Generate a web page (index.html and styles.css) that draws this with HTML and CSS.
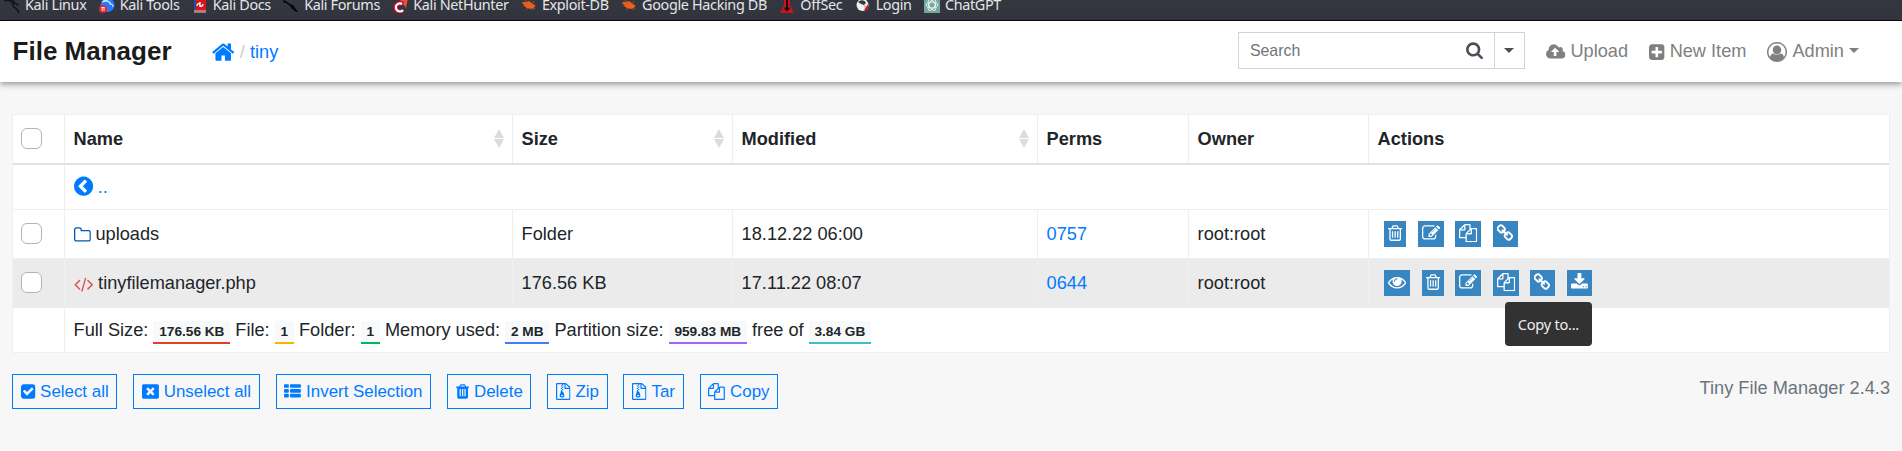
FILE: index.html
```html
<!DOCTYPE html>
<html lang="en">
<head>
<meta charset="utf-8">
<title>File Manager</title>
<link rel="stylesheet" href="styles.css">
</head>
<body>
<svg class="defs" aria-hidden="true">
  <symbol id="home" viewBox="64 0 1664 1792"><path d="M1472 992v480q0 26-19 45t-45 19h-384v-384h-256v384h-384q-26 0-45-19t-19-45v-480q0-1 .5-3t.5-3l575-474 575 474q1 2 1 6zm223-69l-62 74q-8 9-21 11h-3q-13 0-21-7l-692-577-692 577q-12 8-24 7-13-2-21-11l-62-74q-8-10-7-23.5t11-21.5l719-599q32-26 76-26t76 26l244 204v-195q0-14 9-23t23-9h192q14 0 23 9t9 23v408l219 182q10 8 11 21.5t-7 23.5z"/></symbol>
  <symbol id="folder" viewBox="64 0 1664 1792"><path d="M1600 1312v-704q0-40-28-68t-68-28h-704q-40 0-68-28t-28-68v-64q0-40-28-68t-68-28h-320q-40 0-68 28t-28 68v960q0 40 28 68t68 28h1216q40 0 68-28t28-68zm128-704v704q0 92-66 158t-158 66h-1216q-92 0-158-66t-66-158v-960q0-92 66-158t158-66h320q92 0 158 66t66 158v32h672q92 0 158 66t66 158z"/></symbol>
  <symbol id="trash-o" viewBox="192 0 1408 1792"><path d="M704 736v576q0 14-9 23t-23 9h-64q-14 0-23-9t-9-23v-576q0-14 9-23t23-9h64q14 0 23 9t9 23zm256 0v576q0 14-9 23t-23 9h-64q-14 0-23-9t-9-23v-576q0-14 9-23t23-9h64q14 0 23 9t9 23zm256 0v576q0 14-9 23t-23 9h-64q-14 0-23-9t-9-23v-576q0-14 9-23t23-9h64q14 0 23 9t9 23zm128 724v-948h-896v948q0 22 7 40.5t14.5 27 10.5 8.5h832q3 0 10.5-8.5t14.5-27 7-40.5zm-672-1076h448l-48-117q-7-9-17-11h-317q-10 2-17 11zm928 32v64q0 14-9 23t-23 9h-96v948q0 83-47 143.5t-113 60.5h-832q-66 0-113-58.5t-47-141.5v-952h-96q-14 0-23-9t-9-23v-64q0-14 9-23t23-9h309l70-167q15-37 54-63t79-26h320q40 0 79 26t54 63l70 167h309q14 0 23 9t9 23z"/></symbol>
  <symbol id="trash" viewBox="192 0 1408 1792"><path d="M704 1376v-704q0-14-9-23t-23-9h-64q-14 0-23 9t-9 23v704q0 14 9 23t23 9h64q14 0 23-9t9-23zm256 0v-704q0-14-9-23t-23-9h-64q-14 0-23 9t-9 23v704q0 14 9 23t23 9h64q14 0 23-9t9-23zm256 0v-704q0-14-9-23t-23-9h-64q-14 0-23 9t-9 23v704q0 14 9 23t23 9h64q14 0 23-9t9-23zm-544-992h448l-48-117q-7-9-17-11h-317q-10 2-17 11zm928 32v64q0 14-9 23t-23 9h-96v948q0 83-47 143.5t-113 60.5h-832q-66 0-113-58.5t-47-141.5v-952h-96q-14 0-23-9t-9-23v-64q0-14 9-23t23-9h309l70-167q15-37 54-63t79-26h320q40 0 79 26t54 63l70 167h309q14 0 23 9t9 23z"/></symbol>
  <symbol id="edit" viewBox="0 0 1792 1792"><path d="M888 1184l116-116-152-152-116 116v56h96v96h56zm440-720q-16-16-33 1l-350 350q-17 17-1 33t33-1l350-350q17-17 1-33zm80 594v190q0 119-84.5 203.5t-203.5 84.5h-832q-119 0-203.5-84.5t-84.5-203.5v-832q0-119 84.5-203.5t203.5-84.5h832q63 0 117 25 15 7 18 23 3 17-9 29l-49 49q-14 14-32 8-23-6-45-6h-832q-66 0-113 47t-47 113v832q0 66 47 113t113 47h832q66 0 113-47t47-113v-126q0-13 9-22l64-64q15-15 35-7t20 29zm-96-738l288 288-672 672h-288v-288zm444 132l-92 92-288-288 92-92q28-28 68-28t68 28l152 152q28 28 28 68t-28 68z"/></symbol>
  <symbol id="copy" viewBox="0 0 1792 1792"><path d="M1696 384q40 0 68 28t28 68v1216q0 40-28 68t-68 28h-960q-40 0-68-28t-28-68v-288h-544q-40 0-68-28t-28-68v-672q0-40 20-88t48-76l408-408q28-28 76-48t88-20h416q40 0 68 28t28 68v328q68-40 128-40h416zm-544 213l-299 299h299v-299zm-640-384l-299 299h299v-299zm196 647l316-316v-416h-384v416q0 40-28 68t-68 28h-416v640h512v-256q0-40 20-88t48-76zm956 804v-1152h-384v416q0 40-28 68t-68 28h-416v640h896z"/></symbol>
  <symbol id="link" viewBox="64 0 1664 1792"><path d="M1456 1216q0-40-28-68l-208-208q-28-28-68-28-42 0-72 32 3 3 19 18.5t21.5 21.5 15 19 13 25.5 3.5 27.5q0 40-28 68t-68 28q-15 0-27.5-3.5t-25.5-13-19-15-21.5-21.5-18.5-19q-33 31-33 73 0 40 28 68l206 207q27 27 68 27 40 0 68-26l147-146q28-28 28-67zm-703-705q0-40-28-68l-206-207q-28-28-68-28-39 0-68 27l-147 146q-28 28-28 67 0 40 28 68l208 208q27 27 68 27 42 0 72-31-3-3-19-18.5t-21.5-21.5-15-19-13-25.5-3.5-27.5q0-40 28-68t68-28q15 0 27.5 3.5t25.5 13 19 15 21.5 21.5 18.5 19q33-31 33-73zm895 705q0 120-85 203l-147 146q-83 83-203 83-121 0-204-85l-206-207q-83-83-83-203 0-123 88-209l-88-88q-86 88-208 88-120 0-204-84l-208-208q-84-84-84-204t85-203l147-146q83-83 203-83 121 0 204 85l206 207q83 83 83 203 0 123-88 209l88 88q86-88 208-88 120 0 204 84l208 208q84 84 84 204z"/></symbol>
  <symbol id="eye" viewBox="0 0 1792 1792"><path d="M1664 960q-152-236-381-353 61 104 61 225 0 185-131.5 316.5t-316.5 131.5-316.5-131.5-131.5-316.5q0-121 61-225-229 117-381 353 133 205 333.5 326.5t434.5 121.5 434.5-121.5 333.5-326.5zm-720-384q0-20-14-34t-34-14q-125 0-214.5 89.5t-89.5 214.5q0 20 14 34t34 14 34-14 14-34q0-86 61-147t147-61q20 0 34-14t14-34zm848 384q0 34-20 69-140 230-376.5 368.5t-499.5 138.5-499.5-139-376.5-368q-20-35-20-69t20-69q140-229 376.5-368t499.5-139 499.5 139 376.5 368q20 35 20 69z"/></symbol>
  <symbol id="download" viewBox="64 0 1664 1792"><path d="M1344 1344q0-26-19-45t-45-19-45 19-19 45 19 45 45 19 45-19 19-45zm256 0q0-26-19-45t-45-19-45 19-19 45 19 45 45 19 45-19 19-45zm128-224v320q0 40-28 68t-68 28h-1472q-40 0-68-28t-28-68v-320q0-40 28-68t68-28h465l135 136q58 56 136 56t136-56l136-136h464q40 0 68 28t28 68zm-325-569q17 41-14 70l-448 448q-18 19-45 19t-45-19l-448-448q-31-29-14-70 17-39 59-39h256v-448q0-26 19-45t45-19h256q26 0 45 19t19 45v448h256q42 0 59 39z"/></symbol>
  <symbol id="upload" viewBox="-64 0 1920 1792"><path d="M1216 864q0-14-9-23l-352-352q-9-9-23-9t-23 9l-351 351q-10 12-10 24 0 14 9 23t23 9h224v352q0 13 9.500 22.500t22.500 9.500h192q13 0 22.500-9.500t9.500-22.500v-352h224q13 0 22.500-9.500t9.500-22.500zm640 288q0 159-112.500 271.500t-271.500 112.500h-1088q-185 0-316.500-131.500t-131.500-316.500q0-130 70-240t188-165q-2-30-2-43 0-212 150-362t362-150q156 0 285.500 87t188.500 231q71-62 166-62 106 0 181 75t75 181q0 76-41 138 130 31 213.500 135.500t83.500 238.500z"/></symbol>
  <symbol id="plus" viewBox="128 0 1536 1792"><path d="M1408 960v-128q0-26-19-45t-45-19h-320v-320q0-26-19-45t-45-19h-128q-26 0-45 19t-19 45v320h-320q-26 0-45 19t-19 45v128q0 26 19 45t45 19h320v320q0 26 19 45t45 19h128q26 0 45-19t19-45v-320h320q26 0 45-19t19-45zm256-544v960q0 119-84.5 203.5t-203.5 84.5h-960q-119 0-203.5-84.5t-84.5-203.5v-960q0-119 84.5-203.5t203.5-84.5h960q119 0 203.5 84.5t84.5 203.5z"/></symbol>
  <symbol id="user" viewBox="0 0 1792 1792"><path d="M896 0q182 0 348 71t286 191 191 286 71 348q0 181-70.5 347t-190.5 286-286 191.5-349 71.5-349-71-285.5-191.5-190.5-286-71-347.5 71-348 191-286 286-191 348-71zm619 1351q149-205 149-455 0-156-61-298t-164-245-245-164-298-61-298 61-245 164-164 245-61 298q0 250 149 455 66-327 306-327 131 128 313 128t313-128q240 0 306 327zm-235-647q0-159-112.5-271.5t-271.5-112.5-271.5 112.5-112.5 271.5 112.5 271.5 271.5 112.5 271.5-112.5 112.5-271.5z"/></symbol>
  <symbol id="search" viewBox="64 0 1664 1792"><path d="M1216 832q0-185-131.5-316.5t-316.5-131.5-316.5 131.5-131.5 316.5 131.5 316.5 316.500 131.500 316.500-131.500 131.500-316.500zm512 832q0 52-38 90t-90 38q-54 0-90-38l-343-342q-179 124-399 124-143 0-273.500-55.500t-225-150-150-225-55.500-273.500 55.500-273.500 150-225 225-150 273.500-55.500 273.500 55.500 225 150 150 225 55.500 273.500q0 220-124 399l343 343q37 37 37 90z"/></symbol>
  <symbol id="back" viewBox="128 0 1536 1792"><path d="M1037 1395l102-102q19-19 19-45t-19-45l-307-307 307-307q19-19 19-45t-19-45l-102-102q-19-19-45-19t-45 19l-454 454q-19 19-19 45t19 45l454 454q19 19 45 19t45-19zm627-499q0 209-103 385.5t-279.5 279.5-385.5 103-385.5-103-279.5-279.5-103-385.5 103-385.5 279.5-279.5 385.5-103 385.5 103 279.5 279.5 103 385.5z"/></symbol>
  <symbol id="code" viewBox="-64 0 1920 1792"><path d="M553 1399l-50 50q-10 10-23 10t-23-10l-466-466q-10-10-10-23t10-23l466-466q10-10 23-10t23 10l50 50q10 10 10 23t-10 23l-393 393 393 393q10 10 10 23t-10 23zm591-1067l-373 1291q-4 13-15.5 19.5t-23.5 2.500l-62-17q-13-4-19.500-15.500t-2.500-24.500l373-1291q4-13 15.500-19.500t23.500-2.500l62 17q13 4 19.500 15.500t2.500 24.500zm657 651l-466 466q-10 10-23 10t-23-10l-50-50q-10-10-10-23t10-23l393-393-393-393q-10-10-10-23t10-23l50-50q10-10 23-10t23 10l466 466q10 10 10 23t-10 23z"/></symbol>
  <symbol id="check" viewBox="128 0 1536 1792"><path d="M813 1299l614-614q19-19 19-45t-19-45l-102-102q-19-19-45-19t-45 19l-467 467-211-211q-19-19-45-19t-45 19l-102 102q-19 19-19 45t19 45l358 358q19 19 45 19t45-19zm851-883v960q0 119-84.5 203.5t-203.5 84.5h-960q-119 0-203.5-84.5t-84.5-203.5v-960q0-119 84.5-203.5t203.5-84.5h960q119 0 203.5 84.5t84.5 203.5z"/></symbol>
  <symbol id="close" viewBox="0 0 1792 1792"><path d="M1175 1321l146-146q10-10 10-23t-10-23l-233-233 233-233q10-10 10-23t-10-23l-146-146q-10-10-23-10t-23 10l-233 233-233-233q-10-10-23-10t-23 10l-146 146q-10 10-10 23t10 23l233 233-233 233q-10 10-10 23t10 23l146 146q10 10 23 10t23-10l233-233 233 233q10 10 23 10t23-10zm617-1033v1216q0 66-47 113t-113 47h-1472q-66 0-113-47t-47-113v-1216q0-66 47-113t113-47h1472q66 0 113 47t47 113z"/></symbol>
  <symbol id="list" viewBox="0 0 1792 1792"><rect y="128" width="512" height="384" rx="96"/><rect y="640" width="512" height="384" rx="96"/><rect y="1152" width="512" height="384" rx="96"/><rect x="640" y="128" width="1152" height="384" rx="96"/><rect x="640" y="640" width="1152" height="384" rx="96"/><rect x="640" y="1152" width="1152" height="384" rx="96"/></symbol>
  <symbol id="zip" viewBox="128 0 1536 1792"><path d="M768 384v-128h-128v128h128zm128 128v-128h-128v128h128zm-128 128v-128h-128v128h128zm128 128v-128h-128v128h128zm700-388q28 28 48 76t20 88v1152q0 40-28 68t-68 28h-1344q-40 0-68-28t-28-68v-1600q0-40 28-68t68-28h896q40 0 88 20t76 48zm-444-244v376h376q-10-29-22-41l-313-313q-12-12-41-22zm384 1528v-1024h-416q-40 0-68-28t-28-68v-416h-128v128h-128v-128h-512v1536h1280zm-627-721l107 349q8 27 8 52 0 83-72.500 137.500t-183.500 54.500-183.500-54.500-72.500-137.500q0-25 8-52 21-63 120-396v-128h128v128h79q22 0 39 13t23 34zm-141 465q53 0 90.500-19t37.500-45-37.500-45-90.500-19-90.500 19-37.500 45 37.500 45 90.500 19z"/></symbol>
  <symbol id="bug" viewBox="0 0 16 16"><path d="M2 5l3 0 3-1 4 3 3 2-2 1 1 2-3-1-1 1-4-1-3-2 0-2-2 0z" fill="#e8601c"/><path d="M4 3l3 4M2 8l4 0M7 11l-2 2M10 11l2 2M12 6l1-2" stroke="#c8551c" stroke-width=".8"/></symbol>
</svg>

<div class="bookmarks">
  <div class="bm"><svg class="fav" viewBox="0 0 16 16"><path d="M0 4c5-2 8 1 9 3 3-1 5 0 5 2M9 7c-2 4 5 3 6 9M3 2c4 0 7 2 8 5" fill="none" stroke="#101114" stroke-width="1.300"/></svg><span>Kali Linux</span></div>
  <div class="bm"><svg class="fav" viewBox="0 0 16 16"><circle cx="8.500" cy="8" r="7" fill="#2777ff"/><path d="M3 5c5-2 8 0 8 2 3 0 3 2 3 3M4 3c4 0 7 2 8 4" fill="none" stroke="#c9e0ff" stroke-width="1.200"/><circle cx="4" cy="12" r="4" fill="#e8262a"/><path d="M2.500 10.500h3M3.200 10.500v3.500M5 10.500v3.500" stroke="#fff" stroke-width=".9"/></svg><span>Kali Tools</span></div>
  <div class="bm"><svg class="fav" viewBox="0 0 16 16"><path d="M2 0h12v13H2z" fill="#d5151b"/><path d="M2 0h2v13H2z" fill="#1d4fa8"/><path d="M2 13h12v2.500H2z" fill="#e9d5d2"/><path d="M2 14h12" stroke="#b01216"/><path d="M5 9c0-3 3-3 3-1s3 2 3-1M8 10V5" fill="none" stroke="#fff" stroke-width="1.300"/></svg><span>Kali Docs</span></div>
  <div class="bm"><svg class="fav" viewBox="0 0 16 16"><path d="M0 3l3 1 4 3 3 1 5 7-2 0-5-4-1-2-4-3-2 0z" fill="#08080a"/></svg><span>Kali Forums</span></div>
  <div class="bm"><svg class="fav" viewBox="0 0 16 16"><path d="M8 3l8-2-2 10z" fill="#ef4b3c"/><path d="M11 14a4.500 4.500 0 1 1 0-7" fill="none" stroke="#d20f35" stroke-width="4.500"/><path d="M11 13a4 4 0 1 1-1-6" fill="none" stroke="#fff" stroke-width="2.200"/></svg><span>Kali NetHunter</span></div>
  <div class="bm"><svg class="fav"><use href="#bug"/></svg><span>Exploit-DB</span></div>
  <div class="bm"><svg class="fav"><use href="#bug"/></svg><span>Google Hacking DB</span></div>
  <div class="bm"><svg class="fav" viewBox="0 0 16 16"><path d="M5 0h6v8l4 8H1l4-8z" fill="#c5161d"/><path d="M8 0v14M5.500 11.500h5" stroke="#17090b" stroke-width="1.800"/></svg><span>OffSec</span></div>
  <div class="bm"><svg class="fav" viewBox="0 0 16 16"><circle cx="7.500" cy="8" r="6" fill="#f2f2f2"/><path d="M3 5c3-3 7-2 8 1l-2 2-3-1z" fill="#3a3a3e"/><path d="M8 8l3 1-1 2z" fill="#efb51b"/><path d="M13 7v6h-4l2-3z" fill="#cc1748"/></svg><span>Login</span></div>
  <div class="bm"><svg class="fav" viewBox="0 0 16 16"><path d="M0 0h16v16H0z" fill="#75a99c"/><g fill="none" stroke="#f2f8f6" stroke-width=".9"><ellipse cx="8" cy="8" rx="5.800" ry="3"/><ellipse cx="8" cy="8" rx="5.800" ry="3" transform="rotate(60 8 8)"/><ellipse cx="8" cy="8" rx="5.800" ry="3" transform="rotate(120 8 8)"/></g></svg><span>ChatGPT</span></div>
</div>

<nav class="navbar">
  <span class="brand">File Manager</span>
  <div class="crumbs"><svg class="i i-home"><use href="#home"/></svg><span class="slash">/</span><a>tiny</a></div>
  <div class="search">
    <span class="field">Search</span>
    <svg class="i i-search"><use href="#search"/></svg>
    <span class="drop"><i class="caret"></i></span>
  </div>
  <a class="nav upload"><svg class="i w1920"><use href="#upload"/></svg>Upload</a>
  <a class="nav new"><svg class="i w1536"><use href="#plus"/></svg>New Item</a>
  <a class="nav admin"><svg class="i i-user"><use href="#user"/></svg>Admin<i class="caret"></i></a>
</nav>

<main>
  <div class="table">
    <div class="row head">
      <div class="cell"><i class="box"></i></div>
      <div class="cell sort">Name<i class="arrows"></i></div>
      <div class="cell sort">Size<i class="arrows"></i></div>
      <div class="cell sort">Modified<i class="arrows"></i></div>
      <div class="cell">Perms</div>
      <div class="cell">Owner</div>
      <div class="cell">Actions</div>
    </div>
    <div class="row short first">
      <div class="cell"></div>
      <div class="cell wide"><a class="up"><svg class="i i-back"><use href="#back"/></svg><span>..</span></a></div>
    </div>
    <div class="row">
      <div class="cell"><i class="box"></i></div>
      <div class="cell"><svg class="i w1664 folder"><use href="#folder"/></svg>uploads</div>
      <div class="cell">Folder</div>
      <div class="cell">18.12.22 06:00</div>
      <div class="cell"><a>0757</a></div>
      <div class="cell">root:root</div>
      <div class="cell actions">
        <b><svg class="i w1408"><use href="#trash-o"/></svg></b>
        <b><svg class="i"><use href="#edit"/></svg></b>
        <b><svg class="i"><use href="#copy"/></svg></b>
        <b><svg class="i w1664"><use href="#link"/></svg></b>
      </div>
    </div>
    <div class="row hover">
      <div class="cell"><i class="box"></i></div>
      <div class="cell"><svg class="i w1920 code"><use href="#code"/></svg>tinyfilemanager.php</div>
      <div class="cell">176.56 KB</div>
      <div class="cell">17.11.22 08:07</div>
      <div class="cell"><a>0644</a></div>
      <div class="cell">root:root</div>
      <div class="cell actions">
        <b><svg class="i"><use href="#eye"/></svg></b>
        <b><svg class="i w1408"><use href="#trash-o"/></svg></b>
        <b><svg class="i"><use href="#edit"/></svg></b>
        <b class="tipped"><svg class="i"><use href="#copy"/></svg><span class="tip">Copy to...</span></b>
        <b><svg class="i w1664"><use href="#link"/></svg></b>
        <b><svg class="i w1664"><use href="#download"/></svg></b>
      </div>
    </div>
    <div class="row short last">
      <div class="cell"></div>
      <div class="cell wide"><p class="sum">Full Size: <span class="badge red">176.56 KB</span> File: <span class="badge amber">1</span> Folder: <span class="badge green">1</span> Memory used: <span class="badge blue">2 MB</span> Partition size: <span class="badge purple">959.83 MB</span> free of <span class="badge teal">3.84 GB</span></p></div>
    </div>
  </div>

  <div class="bottom">
    <div class="buttons">
      <a class="btn"><svg class="i w1536"><use href="#check"/></svg>Select all</a>
      <a class="btn"><svg class="i"><use href="#close"/></svg>Unselect all</a>
      <a class="btn"><svg class="i"><use href="#list"/></svg>Invert Selection</a>
      <a class="btn"><svg class="i w1408"><use href="#trash"/></svg>Delete</a>
      <a class="btn"><svg class="i w1536"><use href="#zip"/></svg>Zip</a>
      <a class="btn"><svg class="i w1536"><use href="#zip"/></svg>Tar</a>
      <a class="btn"><svg class="i"><use href="#copy"/></svg>Copy</a>
    </div>
    <span class="version">Tiny File Manager 2.4.3</span>
  </div>
</main>
</body>
</html>
```
FILE: styles.css
```css
* { box-sizing: border-box; }
body {
  margin: 0;
  height: 451px;
  overflow: hidden;
  background: #f7f7f7;
  color: #212529;
  font: 18.2px/1.5 "Liberation Sans", Arial, sans-serif;
}
.defs { display: none; }
a { color: #007bff; }

/* icons: one em tall, width follows the glyph advance */
.i { display: inline-block; flex: none; width: 1em; height: 1em; fill: currentColor; vertical-align: -0.143em; overflow: visible; }
.w1408 { width: 0.7857em; }
.w1536 { width: 0.857em; }
.w1664 { width: 0.9286em; }
.w1920 { width: 1.0714em; }

/* bookmarks toolbar */
.bookmarks {
  display: flex;
  height: 21px;
  padding-left: 4px;
  gap: 12.3px;
  overflow: hidden;
  background: #33353f;
  border-bottom: 1px solid #0c0c0d;
  color: #e6e6e8;
  font: 14.4px/20px "Noto Sans", sans-serif;
  letter-spacing: -.34px;
  white-space: nowrap;
}
.bm { display: flex; gap: 5px; height: 20px; margin-top: -5px; }
.fav { width: 16px; height: 16px; margin-top: 2px; flex: none; }

/* navbar */
.navbar {
  position: relative;
  display: flex;
  align-items: center;
  height: 61px;
  padding: 0 43px 0 12.6px;
  background: #fff;
  box-shadow: 0 4px 5px 0 rgba(0,0,0,.14), 0 1px 10px 0 rgba(0,0,0,.12), 0 2px 4px -1px rgba(0,0,0,.2);
}
.brand { width: 199.8px; font-size: 26px; font-weight: 700; color: #1b1b1b; }
.crumbs { display: flex; align-items: center; flex: 1; padding-top: 2px; }
.i-home { font-size: 24.2px; width: .9286em; color: #007bff; }
.slash { margin: 0 5px 0 5px; color: #ccc; }
.search { display: flex; align-items: center; width: 287px; height: 37px; margin: 0 21px 2px 0; border: 1px solid #ced4da; color: #495057; }
.field { flex: 1; padding-left: 11px; font-size: 15.9px; color: #6c757d; }
.i-search { width: 17px; height: 18.200px; margin-right: 11px; }
.drop { display: flex; align-items: center; justify-content: center; width: 30px; height: 35px; border-left: 1px solid #ced4da; }
.caret { display: block; width: 0; border: 5px solid transparent; border-top-color: currentColor; border-bottom: 0; }
.nav { display: flex; align-items: center; padding-top: 1px; color: #808080; gap: 5px; }
.nav .caret { margin-bottom: 2px; }
.upload, .new { margin-right: 21px; }
.i-user { font-size: 20px; }

/* file table */
main { padding: 32px 12px 0; }
.table { border: 1px solid #efefef; background: #fff; }
.row { display: grid; grid-template-columns: 51px 448px 220px 305px 151px 180px 1fr; height: 49px; border-top: 1px solid #efefef; }
.cell { display: flex; align-items: center; padding: 1.400px 0 0 8.600px; border-left: 1px solid #efefef; }
.cell:first-child { padding: 0 0 1px 8px; border-left: 0; }
.wide { grid-column: 2 / -1; }
.head { height: 50px; border-top: 0; border-bottom: 2px solid #dee2e6; font-weight: 700; }
.short { height: 45px; }
.first { height: 44px; border-top: 0; }
.hover { background: #ebebeb; }
.box { width: 21px; height: 21px; border: 1px solid #adb5bd; border-radius: 6px; background: #fff; }
.sort { justify-content: space-between; padding-right: 8px; }
.arrows { display: grid; gap: 1px; margin-bottom: 2px; }
.arrows::before, .arrows::after { content: ""; border: 5.500px solid transparent; }
.arrows::before { border-top: 0; border-bottom: 9px solid #dcdcdc; }
.arrows::after { border-bottom: 0; border-top: 9px solid #dcdcdc; }
.up { display: flex; align-items: center; gap: 5px; }
.i-back { font-size: 22.4px; width: .857em; margin-bottom: 3px; }
.folder { color: #0157b3; margin-right: 5px; }
.code { color: #dc4a4e; margin-right: 5px; }
.actions { padding: 0 0 0 15px; gap: 11.400px; }
.actions b { display: block; height: 26px; padding: 3.400px 4px; background: #3785c1; color: #fff; line-height: 0; }
.actions .i { display: block; }
.tipped { position: relative; }
.tip {
  position: absolute;
  left: 12px;
  top: 32px;
  z-index: 2;
  width: 87px;
  height: 44px;
  border-radius: 4px;
  background: #323232;
  color: #eee;
  font: 14.6px/44px "Noto Sans", sans-serif;
  letter-spacing: -.25px;
  text-align: center;
}
.sum { margin: 0; white-space: nowrap; }
.badge { display: inline-block; height: 23px; padding: 0 5.800px; background: #f8f9fa; border-bottom: 2px solid; font-size: 13.650px; font-weight: 700; line-height: 21px; }
.red { border-color: #e0412b; }
.amber { border-color: #f7b500; }
.green { border-color: #00b85c; }
.blue { border-color: #3f7ef6; }
.purple { border-color: #a463f7; }
.teal { border-color: #3fbfc9; }

/* bulk actions */
.bottom { display: flex; justify-content: space-between; margin-top: 21px; }
.buttons { display: flex; gap: 15.900px; }
.btn { display: flex; align-items: center; gap: 5px; height: 35px; padding: 0 7.650px; border: 1px solid #007bff; font-size: 16.9px; white-space: nowrap; }
.version { padding-top: 1px; color: #6c757d; }
```
